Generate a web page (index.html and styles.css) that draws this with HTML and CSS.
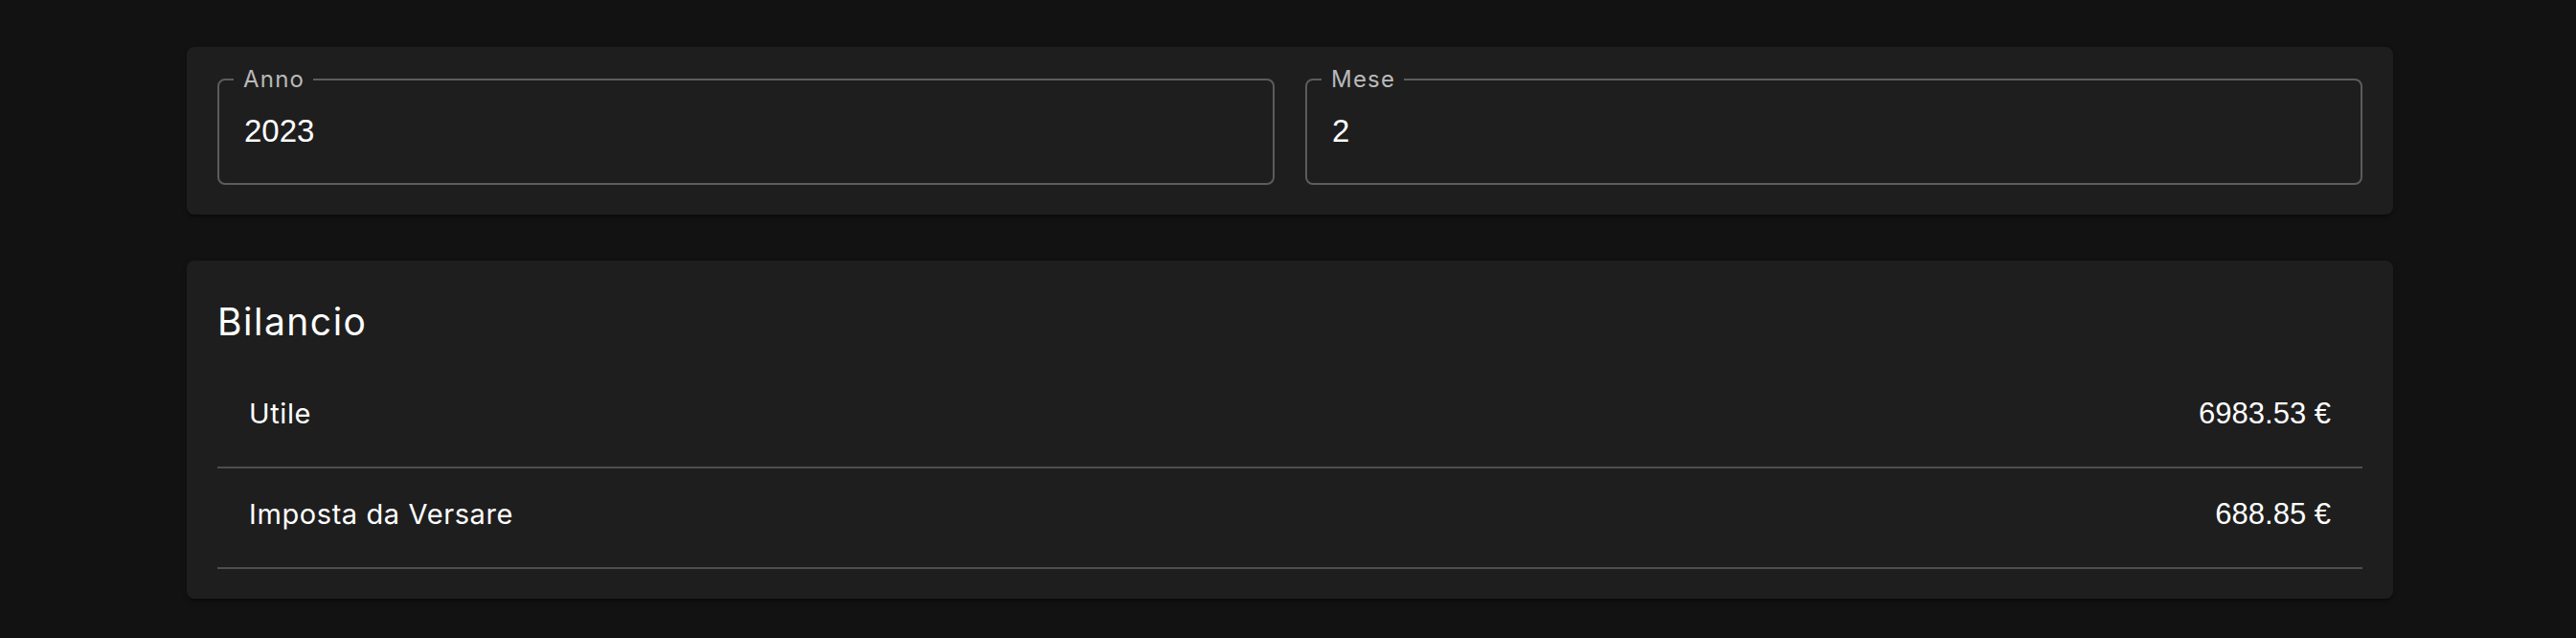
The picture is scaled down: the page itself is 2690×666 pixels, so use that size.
FILE: index.html
```html
<!DOCTYPE html>
<html lang="it">
<head>
<meta charset="utf-8">
<title>Bilancio</title>
<link rel="stylesheet" href="styles.css">
</head>
<body>
<main class="page">
  <div class="container">
    <section class="card filters">
      <fieldset class="field">
        <legend class="field-label">Anno</legend>
        <div class="field-value">2023</div>
      </fieldset>
      <fieldset class="field">
        <legend class="field-label">Mese</legend>
        <div class="field-value">2</div>
      </fieldset>
    </section>

    <section class="card summary">
      <h2 class="title">Bilancio</h2>
      <ul class="list">
        <li class="row">
          <span class="row-label">Utile</span>
          <span class="row-value">6983.53 €</span>
        </li>
        <li class="row">
          <span class="row-label">Imposta da Versare</span>
          <span class="row-value">688.85 €</span>
        </li>
      </ul>
    </section>
  </div>
</main>
</body>
</html>
```
FILE: styles.css
```css
* { box-sizing: border-box; }

html, body {
  margin: 0;
  padding: 0;
  background: #121212;
  color: #ffffff;
  font-family: Inter, "Noto Sans", sans-serif;
}

.page {
  padding: 49px 0 40px 4px;
}

.container {
  width: 2304px;
  margin: 0 auto;
  display: flex;
  flex-direction: column;
  gap: 48px;
}

.card {
  background: #1e1e1e;
  border-radius: 8px;
  box-shadow: 0 4px 2px -2px rgba(0,0,0,0.2), 0 2px 2px 0 rgba(0,0,0,0.14), 0 2px 6px 0 rgba(0,0,0,0.12);
}

.filters {
  display: grid;
  grid-template-columns: 1fr 1fr;
  column-gap: 32px;
  padding: 22px 32px 31px;
}

.field {
  margin: 0;
  min-width: 0;
  border: 2px solid #5c5c5c;
  border-radius: 8px;
  padding: 22px 0 34px;
}

.field-label {
  margin-left: 15px;
  padding: 0 9px 0 10px;
  font-family: Inter, "Noto Sans", sans-serif;
  font-size: 24px;
  letter-spacing: 1.2px;
  line-height: 24px;
  color: #b9b9b9;
}

.field-value {
  padding: 0 26px;
  font-family: "Liberation Sans", Arial, sans-serif;
  font-size: 33px;
  line-height: 40px;
  color: #ffffff;
}

.summary {
  padding: 32px 32px 31px;
}

.title {
  margin: 0;
  font-family: Inter, "Noto Sans", sans-serif;
  font-weight: 400;
  font-size: 39px;
  letter-spacing: 1.5px;
  line-height: 64px;
}

.list {
  list-style: none;
  margin: 0;
  padding: 16px 0 0;
}

.row {
  display: flex;
  justify-content: space-between;
  align-items: baseline;
  padding: 24px 33px 31px;
  border-bottom: 2px solid #4e4e4e;
  line-height: 48px;
}

.row-label {
  font-family: Inter, "Noto Sans", sans-serif;
  font-size: 29px;
  letter-spacing: 0.6px;
}

.row-value {
  font-family: "Liberation Sans", Arial, sans-serif;
  font-size: 31px;
}
```
